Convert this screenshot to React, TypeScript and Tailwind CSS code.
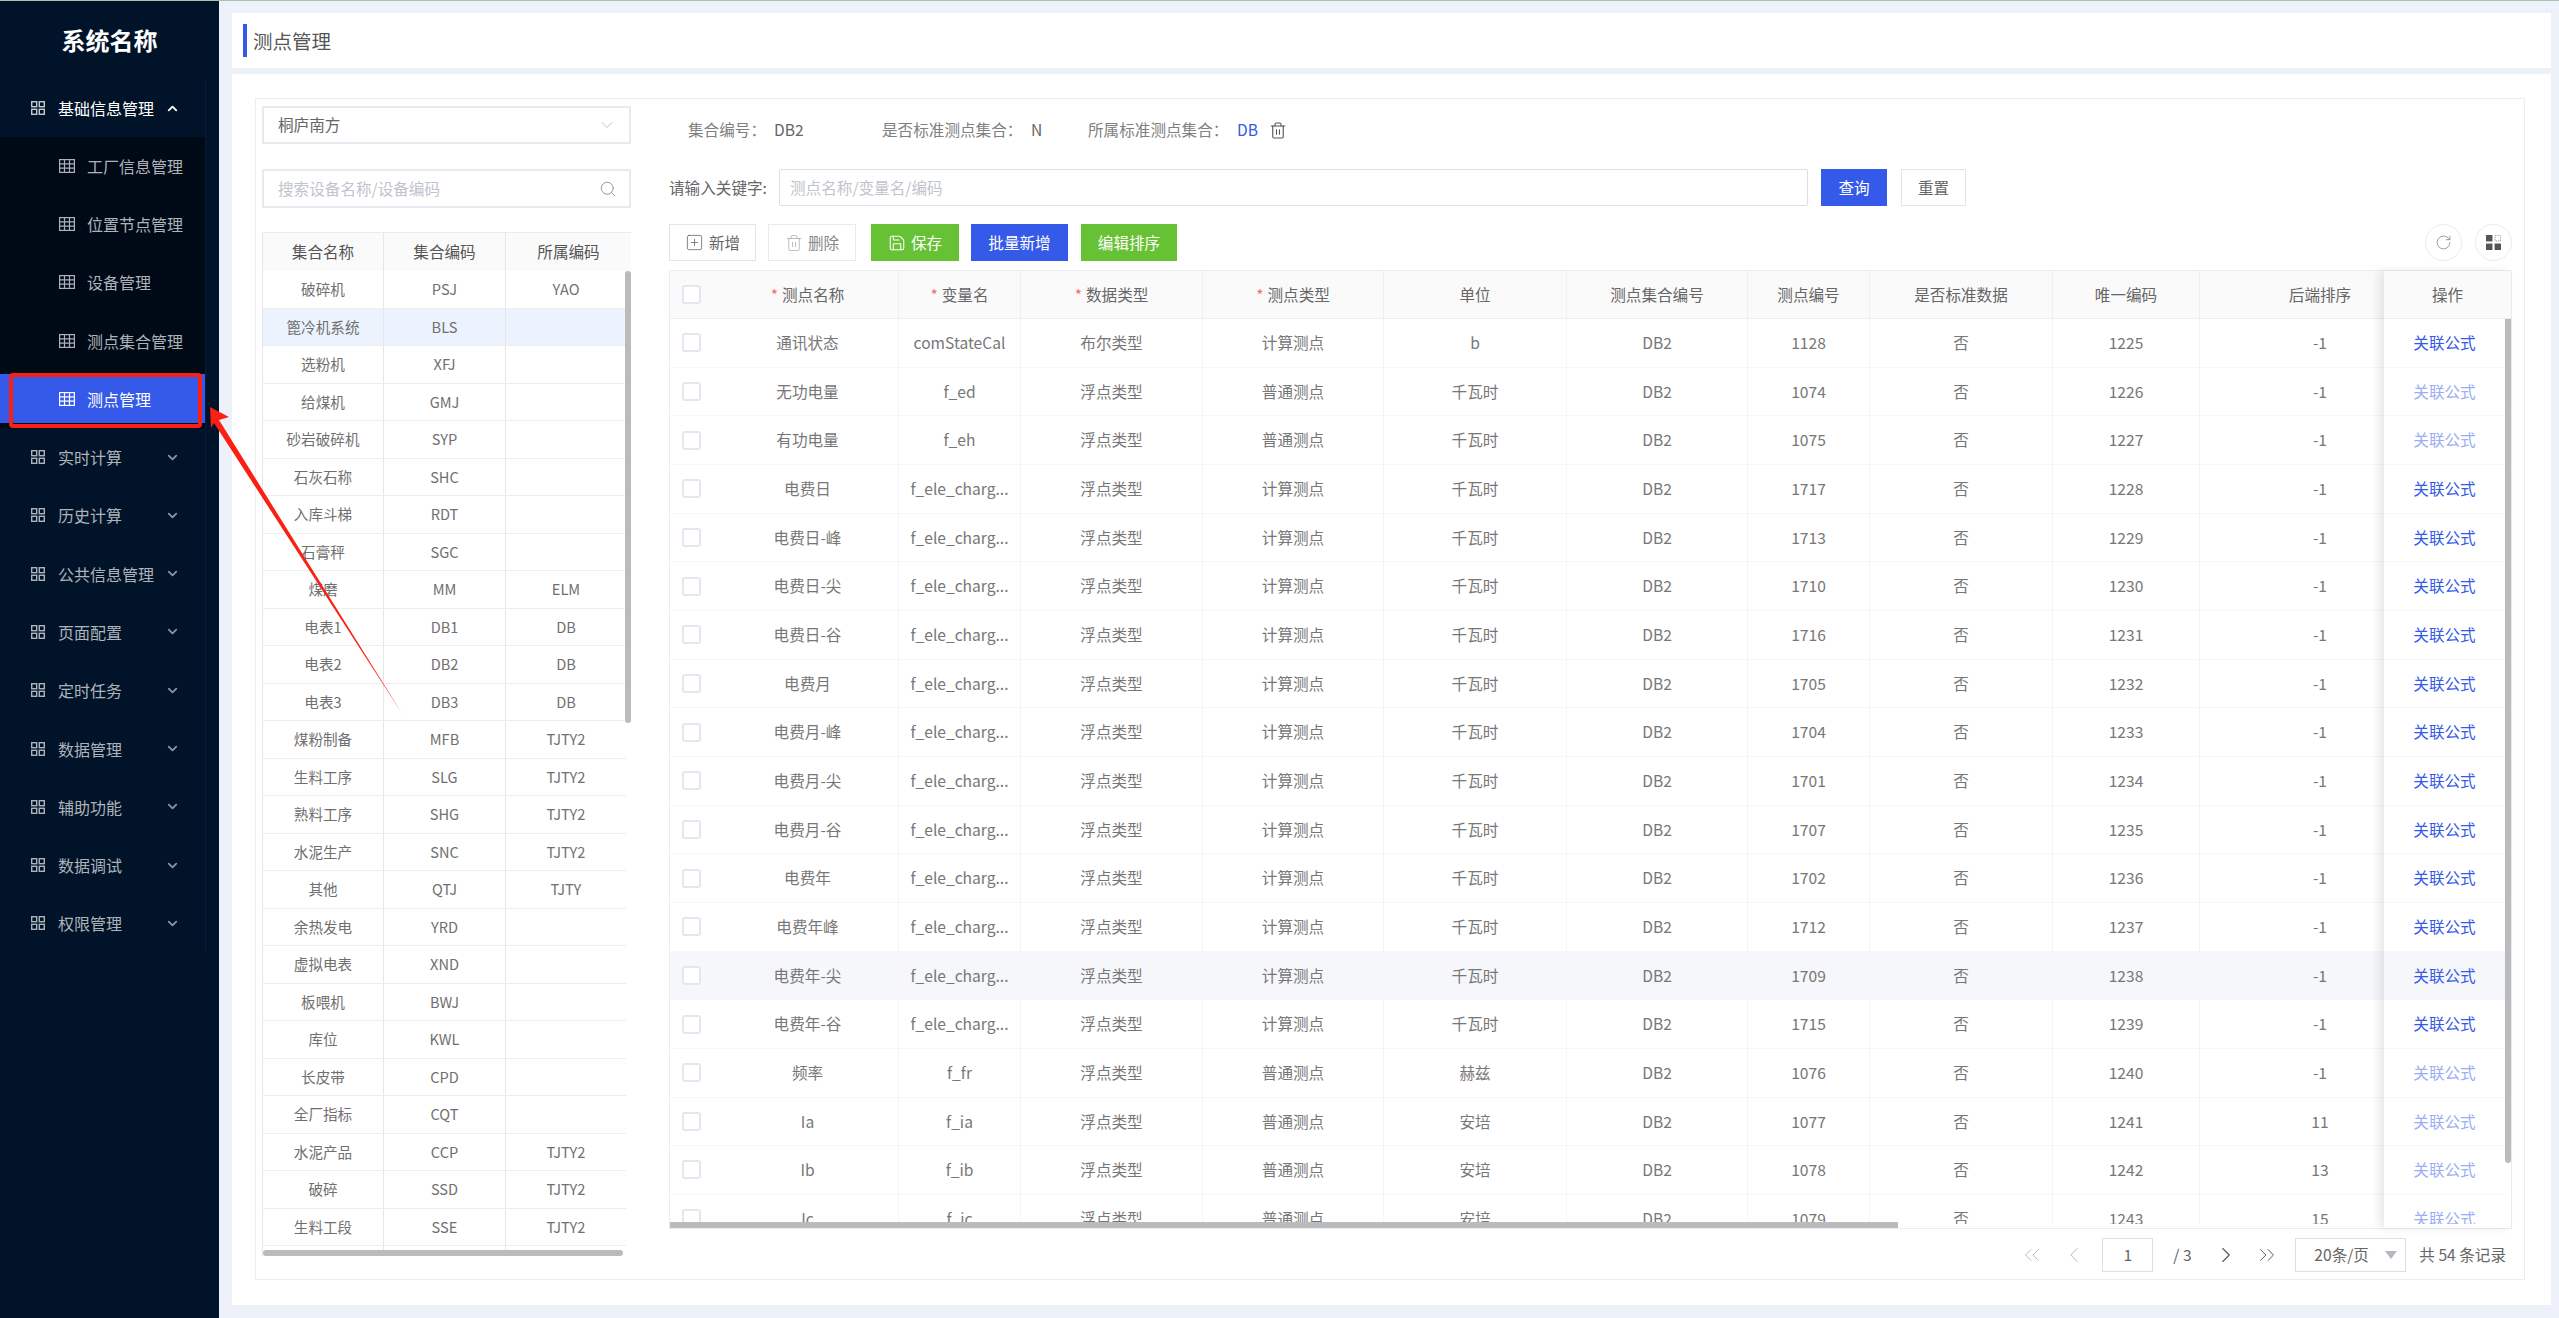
import { ChevronDown, ChevronUp, ChevronLeft, ChevronRight, ChevronsLeft, ChevronsRight, RotateCw, Search, Trash2, Save, SquarePlus } from 'lucide-react'

const topMenus = ['实时计算', '历史计算', '公共信息管理', '页面配置', '定时任务', '数据管理', '辅助功能', '数据调试', '权限管理']
const subMenus = ['工厂信息管理', '位置节点管理', '设备管理', '测点集合管理', '测点管理']

const groups = [
  ['破碎机', 'PSJ', 'YAO'],
  ['篦冷机系统', 'BLS', ''],
  ['选粉机', 'XFJ', ''],
  ['给煤机', 'GMJ', ''],
  ['砂岩破碎机', 'SYP', ''],
  ['石灰石称', 'SHC', ''],
  ['入库斗梯', 'RDT', ''],
  ['石膏秤', 'SGC', ''],
  ['煤磨', 'MM', 'ELM'],
  ['电表1', 'DB1', 'DB'],
  ['电表2', 'DB2', 'DB'],
  ['电表3', 'DB3', 'DB'],
  ['煤粉制备', 'MFB', 'TJTY2'],
  ['生料工序', 'SLG', 'TJTY2'],
  ['熟料工序', 'SHG', 'TJTY2'],
  ['水泥生产', 'SNC', 'TJTY2'],
  ['其他', 'QTJ', 'TJTY'],
  ['余热发电', 'YRD', ''],
  ['虚拟电表', 'XND', ''],
  ['板喂机', 'BWJ', ''],
  ['库位', 'KWL', ''],
  ['长皮带', 'CPD', ''],
  ['全厂指标', 'CQT', ''],
  ['水泥产品', 'CCP', 'TJTY2'],
  ['破碎', 'SSD', 'TJTY2'],
  ['生料工段', 'SSE', 'TJTY2'],
  ['', '', ''],
]

const CHARGE = 'f_ele_charg...'
const points = [
  ['通讯状态', 'comStateCal', '布尔类型', '计算测点', 'b', '1128', '1225', '-1'],
  ['无功电量', 'f_ed', '浮点类型', '普通测点', '千瓦时', '1074', '1226', '-1'],
  ['有功电量', 'f_eh', '浮点类型', '普通测点', '千瓦时', '1075', '1227', '-1'],
  ['电费日', CHARGE, '浮点类型', '计算测点', '千瓦时', '1717', '1228', '-1'],
  ['电费日-峰', CHARGE, '浮点类型', '计算测点', '千瓦时', '1713', '1229', '-1'],
  ['电费日-尖', CHARGE, '浮点类型', '计算测点', '千瓦时', '1710', '1230', '-1'],
  ['电费日-谷', CHARGE, '浮点类型', '计算测点', '千瓦时', '1716', '1231', '-1'],
  ['电费月', CHARGE, '浮点类型', '计算测点', '千瓦时', '1705', '1232', '-1'],
  ['电费月-峰', CHARGE, '浮点类型', '计算测点', '千瓦时', '1704', '1233', '-1'],
  ['电费月-尖', CHARGE, '浮点类型', '计算测点', '千瓦时', '1701', '1234', '-1'],
  ['电费月-谷', CHARGE, '浮点类型', '计算测点', '千瓦时', '1707', '1235', '-1'],
  ['电费年', CHARGE, '浮点类型', '计算测点', '千瓦时', '1702', '1236', '-1'],
  ['电费年峰', CHARGE, '浮点类型', '计算测点', '千瓦时', '1712', '1237', '-1'],
  ['电费年-尖', CHARGE, '浮点类型', '计算测点', '千瓦时', '1709', '1238', '-1'],
  ['电费年-谷', CHARGE, '浮点类型', '计算测点', '千瓦时', '1715', '1239', '-1'],
  ['频率', 'f_fr', '浮点类型', '普通测点', '赫兹', '1076', '1240', '-1'],
  ['Ia', 'f_ia', '浮点类型', '普通测点', '安培', '1077', '1241', '11'],
  ['Ib', 'f_ib', '浮点类型', '普通测点', '安培', '1078', '1242', '13'],
  ['Ic', 'f_ic', '浮点类型', '普通测点', '安培', '1079', '1243', '15'],
]

function GridIcon({ className }: { className: string }) {
  return (
    <svg viewBox="0 0 14 14" fill="none" stroke="currentColor" strokeWidth="1.4" className={className}>
      <rect x="0.7" y="0.7" width="5" height="5" />
      <rect x="8.3" y="0.7" width="5" height="5" />
      <rect x="0.7" y="8.3" width="5" height="5" />
      <rect x="8.3" y="8.3" width="5" height="5" />
    </svg>
  )
}

function TableIcon({ className }: { className: string }) {
  return (
    <svg viewBox="0 0 16 16" fill="none" stroke="currentColor" strokeWidth="1.2" className={className}>
      <rect x="0.6" y="1.6" width="14.8" height="12.8" />
      <path d="M0.6 5.8H15.4M0.6 10.2H15.4M5.5 1.6V14.4M10.5 1.6V14.4" />
    </svg>
  )
}

function Checkbox() {
  return <span className="block w-[19px] h-[19px] bg-white border-2 border-[#e3e7ef] rounded-[3px]" />
}

function Sidebar() {
  return (
    <aside className="w-[219px] flex-none bg-[#011329] overflow-hidden">
      <div className="h-[78px] flex items-center justify-center text-[24px] font-bold text-white">系统名称</div>
      <div className="w-[205px] border-r border-[#0a1a3a] box-content">
        <div className="h-[58px] flex items-center pl-[31px] text-white text-[16px]">
          <GridIcon className="w-[14px] h-[14px] text-[#c5cad1]" />
          <span className="ml-[13px] w-[106px]">基础信息管理</span>
          <ChevronUp className="w-[15px] h-[15px] ml-[1px]" strokeWidth={3} />
        </div>
        <div className="bg-[#000a17]">
          {subMenus.map((name, i) => {
            const active = i === subMenus.length - 1
            return (
              <div key={name} className="relative h-[58.2px] flex items-center text-[16px]">
                <div className={active ? 'w-full h-[49px] flex items-center pl-[59px] bg-[#3559e8] text-white' : 'w-full h-[49px] flex items-center pl-[59px] text-[#aeb3ba]'}>
                  <TableIcon className="w-[16px] h-[16px]" />
                  <span className="ml-[12px]">{name}</span>
                </div>
                {active && <div className="absolute left-[9px] top-[3px] w-[193px] h-[55px] border-4 border-[#fa1f14] rounded-[4px]" />}
              </div>
            )
          })}
        </div>
        {topMenus.map((name) => (
          <div key={name} className="h-[58.3px] flex items-center pl-[31px] text-[#aeb3ba] text-[16px]">
            <GridIcon className="w-[14px] h-[14px]" />
            <span className="ml-[13px] w-[106px]">{name}</span>
            <ChevronDown className="w-[15px] h-[15px] ml-[1px] text-[#8b929b]" strokeWidth={3} />
          </div>
        ))}
      </div>
    </aside>
  )
}

function GroupPanel() {
  return (
    <div className="w-[369px] flex-none pt-[7px]">
      <div className="h-[38px] border-2 border-[#e8eaf0] flex items-center justify-between pl-[14px] pr-[12px] text-[15.6px] text-[#666]">
        <span>桐庐南方</span>
        <ChevronDown className="w-[20px] h-[20px] text-[#b5b5b5]" strokeWidth={1} />
      </div>
      <div className="mt-[25px] h-[39px] border-2 border-[#e8eaf0] flex items-center justify-between pl-[14px] pr-[12px] text-[15.6px] text-[#c0c4cc]">
        <span>搜索设备名称/设备编码</span>
        <Search className="w-[18px] h-[18px] text-[#8f8f8f]" strokeWidth={1.2} />
      </div>
      <div className="mt-[24px] border-l border-[#e6e6e6]">
        <div className="h-[39px] flex bg-[#fafafa] border-t border-[#ebebeb] text-[15.6px] text-[#555]">
          <div className="w-[121px] flex items-center justify-center border-r border-[#e6e6e6]">集合名称</div>
          <div className="w-[122px] flex items-center justify-center border-r border-[#e6e6e6]">集合编码</div>
          <div className="flex-1 flex items-center justify-center">所属编码</div>
        </div>
        <div className="relative h-[979px] overflow-hidden">
          {groups.map((row, i) => (
            <div key={i} className={i === 1 ? 'h-[37.5px] w-[363px] flex bg-[#ecf3fe] border-b border-[#eeeeee] text-[14.6px] text-[#707070]' : 'h-[37.5px] w-[363px] flex border-b border-[#eeeeee] text-[14.6px] text-[#707070]'}>
              <div className="w-[121px] flex items-center justify-center border-r border-[#e6e6e6]">{row[0]}</div>
              <div className="w-[122px] flex items-center justify-center border-r border-[#e6e6e6]">{row[1]}</div>
              <div className="flex-1 flex items-center justify-center">{row[2]}</div>
            </div>
          ))}
          <div className="absolute right-0 top-0 w-[6px] h-[452px] bg-[#bbbbbb] rounded-[3px]" />
        </div>
        <div className="h-[6px] w-[360px] bg-[#bbbbbb] rounded-[3px]" />
      </div>
    </div>
  )
}

function CellName({ text, required }: { text: string; required?: boolean }) {
  return (
    <>
      {required && <span className="text-[#f56c6c] mr-[4px]">*</span>}
      {text}
    </>
  )
}

function PointsTable() {
  return (
    <div className="mt-[9px] flex border border-[#e9ecf2] h-[959px] relative">
      <div className="w-[1714px] flex-none overflow-hidden">
        <div className="w-[1771px] h-[48px] flex items-stretch bg-[#fafafa] border-b border-[#eeeeee] text-[15.6px] text-[#666]">
          <div className="w-[47px] flex items-center pl-[12px]"><Checkbox /></div>
          <div className="w-[182px] flex items-center justify-center border-r border-[#f0f0f0]"><CellName text="测点名称" required /></div>
          <div className="w-[122px] flex items-center justify-center border-r border-[#f0f0f0]"><CellName text="变量名" required /></div>
          <div className="w-[182px] flex items-center justify-center border-r border-[#f0f0f0]"><CellName text="数据类型" required /></div>
          <div className="w-[181px] flex items-center justify-center border-r border-[#f0f0f0]"><CellName text="测点类型" required /></div>
          <div className="w-[183px] flex items-center justify-center border-r border-[#f0f0f0]">单位</div>
          <div className="w-[181px] flex items-center justify-center border-r border-[#f0f0f0]">测点集合编号</div>
          <div className="w-[122px] flex items-center justify-center border-r border-[#f0f0f0]">测点编号</div>
          <div className="w-[183px] flex items-center justify-center border-r border-[#f0f0f0]">是否标准数据</div>
          <div className="w-[147px] flex items-center justify-center border-r border-[#f0f0f0]">唯一编码</div>
          <div className="w-[240px] flex-none flex items-center justify-center">后端排序</div>
        </div>
        <div className="h-[905px] overflow-hidden">
          {points.map((row, i) => (
            <div key={i} className={i === 13 ? 'w-[1771px] h-[48.67px] flex items-stretch bg-[#f5f7fa] border-b border-[#f7f7f8] text-[15.6px] text-[#777]' : 'w-[1771px] h-[48.67px] flex items-stretch border-b border-[#f7f7f8] text-[15.6px] text-[#777]'}>
              <div className="w-[47px] flex items-center pl-[12px]"><Checkbox /></div>
              <div className="w-[182px] flex items-center justify-center border-r border-[#f5f5f6]">{row[0]}</div>
              <div className="w-[122px] flex items-center justify-center border-r border-[#f5f5f6]">{row[1]}</div>
              <div className="w-[182px] flex items-center justify-center border-r border-[#f5f5f6]">{row[2]}</div>
              <div className="w-[181px] flex items-center justify-center border-r border-[#f5f5f6]">{row[3]}</div>
              <div className="w-[183px] flex items-center justify-center border-r border-[#f5f5f6]">{row[4]}</div>
              <div className="w-[181px] flex items-center justify-center border-r border-[#f5f5f6]">DB2</div>
              <div className="w-[122px] flex items-center justify-center border-r border-[#f5f5f6]">{row[5]}</div>
              <div className="w-[183px] flex items-center justify-center border-r border-[#f5f5f6]">否</div>
              <div className="w-[147px] flex items-center justify-center border-r border-[#f5f5f6]">{row[6]}</div>
              <div className="w-[240px] flex-none flex items-center justify-center">{row[7]}</div>
            </div>
          ))}
        </div>
      </div>
      <div className="relative flex-1 bg-white shadow-[-5px_0_9px_rgba(0,0,0,0.09)] z-10">
        <div className="h-[48px] flex items-center justify-center bg-[#fafafa] border-b border-[#eeeeee] text-[15.6px] text-[#666]">操作</div>
        <div className="h-[905px] w-[121px] overflow-hidden">
          {points.map((row, i) => (
            <div key={i} className={i === 13 ? 'h-[48.67px] flex items-center justify-center bg-[#f5f7fa] text-[15.6px]' : 'h-[48.67px] flex items-center justify-center border-b border-[#f7f7f8] text-[15.6px]'}>
              <span className={i === 0 || (i >= 3 && i <= 14) ? 'text-[#3559e8]' : 'text-[#9aaef5]'}>关联公式</span>
            </div>
          ))}
        </div>
        <div className="absolute right-[0px] top-[48px] w-[6px] h-[844px] bg-[#bbbbbb] rounded-b-[3px]" />
      </div>
      <div className="absolute left-0 bottom-0 w-[1228px] h-[6px] bg-[#bbbbbb] z-20" />
    </div>
  )
}

function Pagination() {
  return (
    <div className="h-[51px] flex items-center justify-end pr-[6px] text-[15.6px] text-[#666]">
      <ChevronsLeft className="w-[26px] h-[26px] text-[#b5b5b5]" strokeWidth={0.9} />
      <ChevronLeft className="w-[26px] h-[26px] ml-[16px] text-[#b5b5b5]" strokeWidth={0.9} />
      <div className="w-[51px] h-[34px] ml-[15px] border border-[#dcdfe6] flex items-center justify-center">1</div>
      <span className="ml-[20px] w-[24px] whitespace-nowrap">/ 3</span>
      <ChevronRight className="w-[26px] h-[26px] ml-[16px] text-[#555]" strokeWidth={1} />
      <ChevronsRight className="w-[26px] h-[26px] ml-[15px] text-[#555]" strokeWidth={0.9} />
      <div className="w-[111px] h-[34px] ml-[15px] border border-[#dcdfe6] flex items-center justify-between pl-[18px] pr-[8px]">
        <span>20条/页</span>
        <span className="w-0 h-0 border-x-[6px] border-x-transparent border-t-[8px] border-t-[#b4b8c4]" />
      </div>
      <span className="ml-[13px]">共 54 条记录</span>
    </div>
  )
}

function PointsPanel() {
  return (
    <div className="flex-1 min-w-0">
      <div className="h-[70px] pb-[8px] flex items-center pl-[19px] text-[15.6px] text-[#808080]">
        <span className="w-[86px]">集合编号：</span>
        <span className="w-[108px] text-[#666]">DB2</span>
        <span className="w-[149px]">是否标准测点集合：</span>
        <span className="w-[57px] text-[#666]">N</span>
        <span className="w-[149px]">所属标准测点集合：</span>
        <span className="w-[32px] text-[#3559e8]">DB</span>
        <Trash2 className="w-[18px] h-[19px] text-[#555]" strokeWidth={1.5} />
      </div>
      <div className="h-[37px] flex items-center text-[15.6px]">
        <span className="w-[110px] text-[#666]">请输入关键字:</span>
        <div className="w-[1029px] h-[37px] border border-[#dcdfe6] rounded-[2px] flex items-center pl-[10px] text-[#c0c4cc]">测点名称/变量名/编码</div>
        <button className="ml-[13px] w-[66px] h-[37px] bg-[#3559e8] text-white">查询</button>
        <button className="ml-[14px] w-[65px] h-[37px] border border-[#e2e5ec] text-[#666]">重置</button>
      </div>
      <div className="mt-[18px] h-[37px] flex items-center text-[15.6px]">
        <button className="w-[87px] h-full border border-[#e2e5ec] flex items-center justify-center gap-[5px] text-[#666]">
          <SquarePlus className="w-[19px] h-[19px]" strokeWidth={1} />
          新增
        </button>
        <button className="ml-[12px] w-[88px] h-full border border-[#e8eaf0] flex items-center justify-center gap-[5px] text-[#888]">
          <Trash2 className="w-[18px] h-[18px] text-[#aaa]" strokeWidth={1} />
          删除
        </button>
        <button className="ml-[15px] w-[88px] h-full bg-[#67c135] flex items-center justify-center gap-[5px] text-white">
          <Save className="w-[18px] h-[18px]" strokeWidth={1.4} />
          保存
        </button>
        <button className="ml-[12px] w-[97px] h-full bg-[#3559e8] text-white">批量新增</button>
        <button className="ml-[13px] w-[96px] h-full bg-[#67c135] text-white">编辑排序</button>
        <div className="ml-auto w-[37px] h-full rounded-full border border-[#e8eaf0] flex items-center justify-center text-[#777]">
          <RotateCw className="w-[17px] h-[17px]" strokeWidth={1} />
        </div>
        <div className="ml-[13px] w-[37px] h-full rounded-full border border-[#e8eaf0] flex items-center justify-center">
          <svg viewBox="0 0 14 14" className="w-[15px] h-[15px]" fill="#555">
            <rect x="0" y="0" width="6" height="6" />
            <rect x="8.5" y="0.5" width="5" height="5" fill="none" stroke="#888" strokeWidth="0.8" strokeDasharray="1.2 1" />
            <rect x="0" y="8" width="6" height="6" />
            <rect x="8" y="8" width="6" height="6" />
          </svg>
        </div>
      </div>
      <PointsTable />
      <Pagination />
    </div>
  )
}

export default function App() {
  return (
    <div className="relative w-[2559px] h-[1318px] overflow-hidden flex border-t border-[#a9c0b2] bg-[#edf1fa] font-['Noto_Sans_CJK_SC','Noto_Sans',sans-serif]">
      <Sidebar />
      <main className="flex-1 min-w-0 pt-[12px] pl-[13px] pr-[8px]">
        <div className="h-[55px] bg-white flex items-center pl-[11px]">
          <span className="w-[4px] h-[33px] bg-[#3559e8]" />
          <span className="ml-[6px] text-[19.5px] text-[#555]">测点管理</span>
        </div>
        <div className="mt-[6px] h-[1231px] bg-white pt-[24px] pl-[23px] pr-[26px]">
          <div className="h-[1182px] border border-[#ebedf2] flex pl-[6px] pr-[12px]">
            <GroupPanel />
            <div className="w-[38px] flex-none" />
            <PointsPanel />
          </div>
        </div>
      </main>
      {/* red annotation arrow pointing at the selected menu item */}
      <svg className="absolute left-0 top-0 w-[2559px] h-[1318px] pointer-events-none z-30" viewBox="0 0 2559 1318">
        <polygon points="210,406 229,416 219,419 403,714 214,422 211,427" fill="#fa2014" />
      </svg>
    </div>
  )
}
